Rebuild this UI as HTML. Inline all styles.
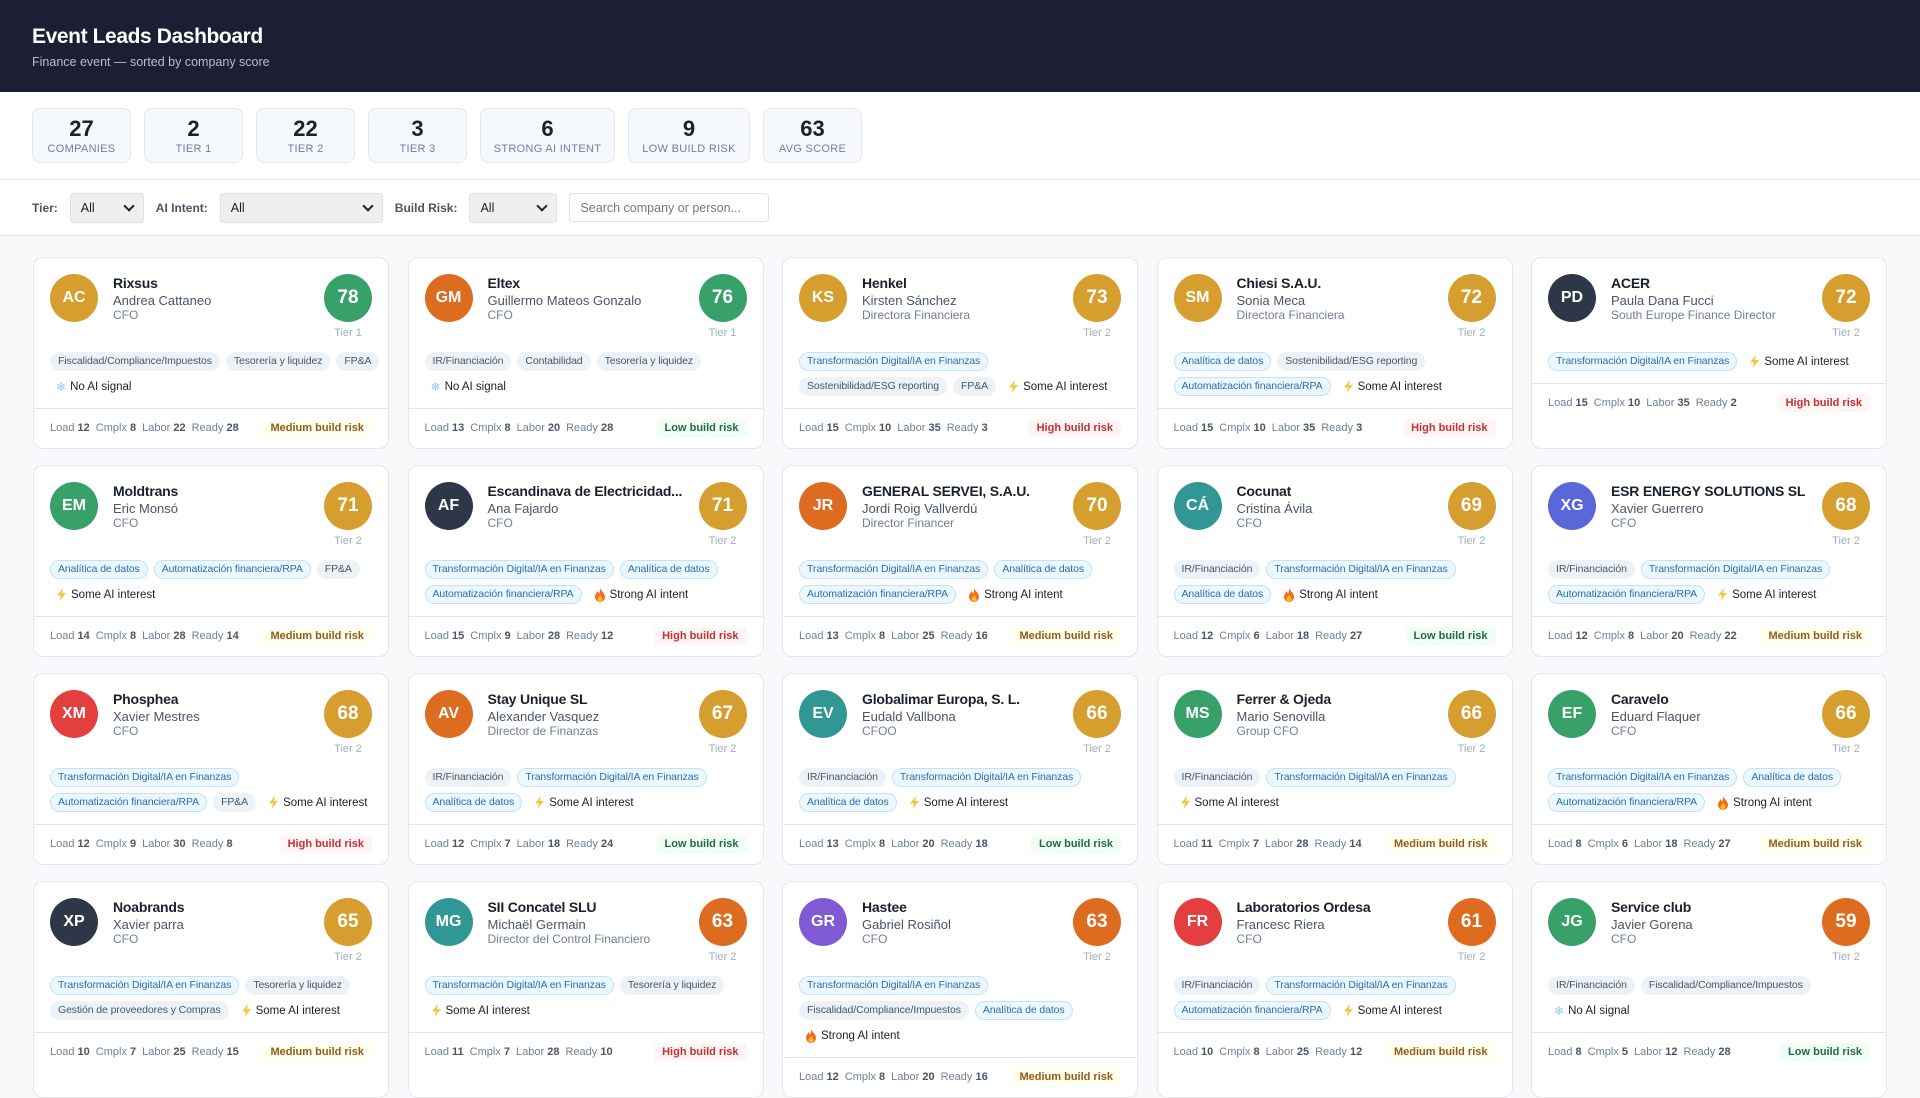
<!DOCTYPE html>
<html><head><meta charset="utf-8"><style>
*{box-sizing:border-box;margin:0;padding:0}
body{width:1920px;height:1080px;overflow:hidden;background:#f7f9fb;font-family:"Liberation Sans",sans-serif;color:#1a202c}
.hdr{height:92px;background:#1c1f33;padding:25px 32px 0}
.hdr h1{font-size:21px;font-weight:bold;color:#fff;line-height:24px;letter-spacing:-0.4px}
.hdr p{font-size:12.5px;color:#b8bdcc;margin-top:6px}
.stats{background:#fff;height:88px;padding:16px 32px 0;display:flex;gap:13px;border-bottom:1px solid #e2e8f0}
.st{height:55px;background:#f5f8fc;border:1px solid #e2e8f0;border-radius:8px;padding:0 6px;text-align:center;width:99px;flex:none}
.st b{display:block;font-size:22px;line-height:22px;margin-top:9px;color:#1a202c}
.st span{display:block;font-size:11px;color:#718096;letter-spacing:.3px;margin-top:3px;white-space:nowrap}
.flt{background:#fff;height:56px;border-bottom:1px solid #e2e8f0;display:flex;align-items:center;padding:0 32px}
.flt label{font-size:12px;font-weight:bold;color:#4a5568;margin-right:12px}
.sel{height:30px;background:#efefef;border:1px solid #dde1e6;border-radius:4px;font-size:12.5px;padding:0 10px;display:flex;align-items:center;justify-content:space-between;margin-right:12px}
.sel:after{content:"";width:6px;height:6px;border-right:2px solid #222;border-bottom:2px solid #222;transform:rotate(45deg);margin-top:-4px}
.srch{width:200px;height:29px;border:1px solid #dde1e6;border-radius:4px;font-size:12.5px;color:#777;padding:0 10px;display:flex;align-items:center}
.grid{display:grid;grid-template-columns:repeat(5,356px);column-gap:18.5px;row-gap:16px;padding:21px 33px 0}
.card{background:#fff;border:1px solid #e2e8f0;border-radius:10px;display:flex;flex-direction:column}
.top{display:flex;padding:16px 16px 0;height:82px}
.av{width:48px;height:48px;border-radius:50%;color:#fff;font-weight:bold;font-size:16px;display:flex;align-items:center;justify-content:center;flex:none}
.info{flex:1;margin-left:15px;min-width:0}
.nm{font-size:14px;font-weight:bold;color:#1a202c;white-space:nowrap;overflow:hidden;text-overflow:ellipsis;margin-top:1px;line-height:17px;letter-spacing:-0.2px}
.ps{font-size:13px;color:#4a5568;line-height:15px;margin-top:1px}
.rl{font-size:12px;color:#718096;line-height:14px}
.sc{width:48px;text-align:center;flex:none;margin-left:8px}
.sc .c{width:48px;height:48px;border-radius:50%;color:#fff;font-weight:bold;font-size:19px;display:flex;align-items:center;justify-content:center}
.sc .t{font-size:11px;color:#a0aec0;margin-top:5px}
.tags{padding:12px 16px 12px}
.row{display:flex;gap:6px;white-space:nowrap;align-items:center;height:19px}
.row+.row{margin-top:6px}
.ch{font-size:10.5px;height:19px;line-height:17px;padding:0 7px;border-radius:10px;border:1px solid transparent;letter-spacing:-0.1px}
.g{background:#edf2f7;color:#4a5568}
.b{background:#ebf8ff;border-color:#bee3f8;color:#2b6cb0}
.ai{font-size:11.5px;color:#1a202c;padding-left:6px;display:flex;align-items:center;gap:4px}
.ai svg{flex:none}
.sn{color:#90cdf4;font-size:12px}
.ft{border-top:1px solid #e2e8f0;padding:10px 16px 11px;display:flex;align-items:center;justify-content:space-between;font-size:11px;color:#718096}
.ft b{color:#4a5568;margin-right:6px}
.bd{font-size:11px;font-weight:bold;padding:3px 8px;border-radius:4px}
.Medium{background:#fffff0;color:#975a16}.Low{background:#f0fff4;color:#276749}.High{background:#fff5f5;color:#c53030}
</style></head><body>
<div class="hdr"><h1>Event Leads Dashboard</h1><p>Finance event — sorted by company score</p></div>
<div class="stats">
<div class="st"><b>27</b><span>COMPANIES</span></div>
<div class="st"><b>2</b><span>TIER 1</span></div>
<div class="st"><b>22</b><span>TIER 2</span></div>
<div class="st"><b>3</b><span>TIER 3</span></div>
<div class="st" style="width:135px"><b>6</b><span>STRONG AI INTENT</span></div>
<div class="st" style="width:122px"><b>9</b><span>LOW BUILD RISK</span></div>
<div class="st"><b>63</b><span>AVG SCORE</span></div>
</div>
<div class="flt">
<label>Tier:</label><div class="sel" style="width:74px">All</div>
<label>AI Intent:</label><div class="sel" style="width:163px">All</div>
<label>Build Risk:</label><div class="sel" style="width:88px">All</div>
<div class="srch">Search company or person...</div>
</div>
<div class="grid" id="g"></div>
<script>
const C={gold:"#d69e2e",org:"#dd6b20",grn:"#38a169",teal:"#319795",dk:"#2d3748",red:"#e53e3e",ind:"#5a67d8",pur:"#805ad5"};
const bolt='<svg width="11" height="13" viewBox="0 0 11 13"><path d="M7 0L1 7.5h4L3.5 13 10 5H6z" fill="#f6c343"/></svg>';
const fire='<svg width="12" height="14" viewBox="0 0 12 14"><path d="M6 0C7 3 11 5 11 9a5 5 0 0 1-10 0C1 6 3 5 3.5 3 5 5 5 6 5 6 6 4 6 2 6 0z" fill="#f56a1d"/><path d="M6 7c1 1.5 2.5 2.5 2.5 4a2.5 2.5 0 0 1-5 0C3.5 10 5 9 6 7z" fill="#fbbf24"/></svg>';
const AI={N:'<span class="ai"><span class="sn">❄</span>No AI signal</span>',S:'<span class="ai">'+bolt+'Some AI interest</span>',X:'<span class="ai">'+fire+'Strong AI intent</span>'};
const T={F:"g|Fiscalidad/Compliance/Impuestos",Te:"g|Tesorería y liquidez",FP:"g|FP&amp;A",IR:"g|IR/Financiación",Co:"g|Contabilidad",Tr:"b|Transformación Digital/IA en Finanzas",So:"g|Sostenibilidad/ESG reporting",An:"b|Analítica de datos",Au:"b|Automatización financiera/RPA",Ge:"g|Gestión de proveedores y Compras"};
const D=[
["AC","gold","Rixsus","Andrea Cattaneo","CFO",78,"grn",1,"F Te FP/N",[12,8,22,28],"Medium"],
["GM","org","Eltex","Guillermo Mateos Gonzalo","CFO",76,"grn",1,"IR Co Te/N",[13,8,20,28],"Low"],
["KS","gold","Henkel","Kirsten Sánchez","Directora Financiera",73,"gold",2,"Tr/So FP S",[15,10,35,3],"High"],
["SM","gold","Chiesi S.A.U.","Sonia Meca","Directora Financiera",72,"gold",2,"An So/Au S",[15,10,35,3],"High"],
["PD","dk","ACER","Paula Dana Fucci","South Europe Finance Director",72,"gold",2,"Tr S",[15,10,35,2],"High"],
["EM","grn","Moldtrans","Eric Monsó","CFO",71,"gold",2,"An Au FP/S",[14,8,28,14],"Medium"],
["AF","dk","Escandinava de Electricidad...","Ana Fajardo","CFO",71,"gold",2,"Tr An/Au X",[15,9,28,12],"High"],
["JR","org","GENERAL SERVEI, S.A.U.","Jordi Roig Vallverdú","Director Financer",70,"gold",2,"Tr An/Au X",[13,8,25,16],"Medium"],
["CÁ","teal","Cocunat","Cristina Ávila","CFO",69,"gold",2,"IR Tr/An X",[12,6,18,27],"Low"],
["XG","ind","ESR ENERGY SOLUTIONS SL","Xavier Guerrero","CFO",68,"gold",2,"IR Tr/Au S",[12,8,20,22],"Medium"],
["XM","red","Phosphea","Xavier Mestres","CFO",68,"gold",2,"Tr/Au FP S",[12,9,30,8],"High"],
["AV","org","Stay Unique SL","Alexander Vasquez","Director de Finanzas",67,"gold",2,"IR Tr/An S",[12,7,18,24],"Low"],
["EV","teal","Globalimar Europa, S. L.","Eudald Vallbona","CFOO",66,"gold",2,"IR Tr/An S",[13,8,20,18],"Low"],
["MS","grn","Ferrer &amp; Ojeda","Mario Senovilla","Group CFO",66,"gold",2,"IR Tr/S",[11,7,28,14],"Medium"],
["EF","grn","Caravelo","Eduard Flaquer","CFO",66,"gold",2,"Tr An/Au X",[8,6,18,27],"Medium"],
["XP","dk","Noabrands","Xavier parra","CFO",65,"gold",2,"Tr Te/Ge S",[10,7,25,15],"Medium"],
["MG","teal","SII Concatel SLU","Michaël Germain","Director del Control Financiero",63,"org",2,"Tr Te/S",[11,7,28,10],"High"],
["GR","pur","Hastee","Gabriel Rosiñol","CFO",63,"org",2,"Tr/F An/X",[12,8,20,16],"Medium"],
["FR","red","Laboratorios Ordesa","Francesc Riera","CFO",61,"org",2,"IR Tr/Au S",[10,8,25,12],"Medium"],
["JG","grn","Service club","Javier Gorena","CFO",59,"org",2,"IR F/N",[8,5,12,28],"Low"]];
let h="";
for(const d of D){
 let rows=d[8].split("/").map(r=>'<div class="row">'+r.split(" ").map(k=>AI[k]?AI[k]:(()=>{const [c,t]=T[k].split("|");return '<span class="ch '+c+'">'+t+'</span>'})()).join("")+'</div>').join("");
 const m=d[9];
 h+=`<div class="card"><div class="top"><div class="av" style="background:${C[d[1]]}">${d[0]}</div><div class="info"><div class="nm">${d[2]}</div><div class="ps">${d[3]}</div><div class="rl">${d[4]}</div></div><div class="sc"><div class="c" style="background:${C[d[6]]}">${d[5]}</div><div class="t">Tier ${d[7]}</div></div></div><div class="tags">${rows}</div><div class="ft"><span>Load <b>${m[0]}</b>Cmplx <b>${m[1]}</b>Labor <b>${m[2]}</b>Ready <b>${m[3]}</b></span><span class="bd ${d[10]}">${d[10]} build risk</span></div></div>`;
}
document.getElementById("g").innerHTML=h;
</script>
</body></html>
